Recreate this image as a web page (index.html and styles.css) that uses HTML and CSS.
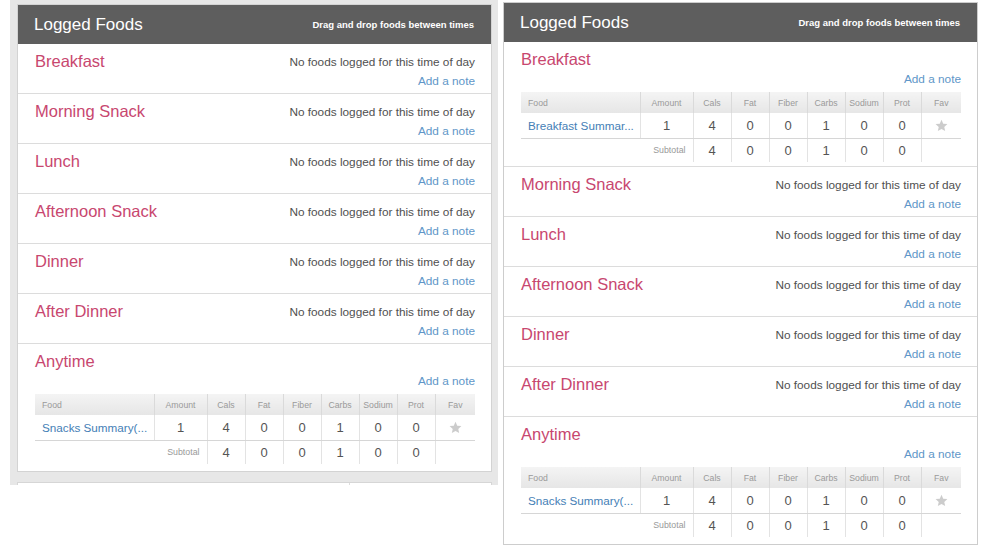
FILE: index.html
```
<!DOCTYPE html>
<html lang="en">
<head>
<meta charset="utf-8">
<title>Logged Foods</title>
<link rel="stylesheet" href="styles.css">
</head>
<body>
<div class="page">
  <div class="col-left">
    <section class="panel">
      <header class="panel-head"><h1>Logged Foods</h1><span class="hint">Drag and drop foods between times</span></header>
      <div class="meal">
        <div class="meal-top"><h2>Breakfast</h2><div class="meal-info"><p class="empty">No foods logged for this time of day</p><a class="note">Add a note</a></div></div>
      </div>
      <div class="meal">
        <div class="meal-top"><h2>Morning Snack</h2><div class="meal-info"><p class="empty">No foods logged for this time of day</p><a class="note">Add a note</a></div></div>
      </div>
      <div class="meal">
        <div class="meal-top"><h2>Lunch</h2><div class="meal-info"><p class="empty">No foods logged for this time of day</p><a class="note">Add a note</a></div></div>
      </div>
      <div class="meal">
        <div class="meal-top"><h2>Afternoon Snack</h2><div class="meal-info"><p class="empty">No foods logged for this time of day</p><a class="note">Add a note</a></div></div>
      </div>
      <div class="meal">
        <div class="meal-top"><h2>Dinner</h2><div class="meal-info"><p class="empty">No foods logged for this time of day</p><a class="note">Add a note</a></div></div>
      </div>
      <div class="meal">
        <div class="meal-top"><h2>After Dinner</h2><div class="meal-info"><p class="empty">No foods logged for this time of day</p><a class="note">Add a note</a></div></div>
      </div>
      <div class="meal meal-table meal-last">
        <div class="meal-top"><h2>Anytime</h2><div class="meal-info"><p class="empty"></p><a class="note">Add a note</a></div></div>
        <table class="foods">
          <colgroup><col class="c-food"><col class="c-amt"><col class="c-n"><col class="c-n"><col class="c-n"><col class="c-n"><col class="c-n"><col class="c-n"><col class="c-fav"></colgroup>
          <thead><tr><th>Food</th><th>Amount</th><th>Cals</th><th>Fat</th><th>Fiber</th><th>Carbs</th><th>Sodium</th><th>Prot</th><th>Fav</th></tr></thead>
          <tbody>
            <tr class="item"><td><a class="food-link">Snacks Summary(...</a></td><td>1</td><td>4</td><td>0</td><td>0</td><td>1</td><td>0</td><td>0</td><td><svg class="star" viewBox="0 0 24 24" width="13" height="13"><path d="M12 1.5l3.2 7.1 7.7.8-5.8 5.2 1.7 7.6L12 18.3l-6.8 3.9 1.7-7.6L1.1 9.4l7.7-.8z"/></svg></td></tr>
            <tr class="subtotal"><td></td><td class="sub-label">Subtotal</td><td>4</td><td>0</td><td>0</td><td>1</td><td>0</td><td>0</td><td></td></tr>
          </tbody>
        </table>
      </div>
    </section>
    <div class="panel-next"><div class="pn-a"></div><div class="pn-b"></div></div>
  </div>

  <section class="panel panel-right">
    <header class="panel-head"><h1>Logged Foods</h1><span class="hint">Drag and drop foods between times</span></header>
    <div class="meal meal-table">
      <div class="meal-top"><h2>Breakfast</h2><div class="meal-info"><p class="empty"></p><a class="note">Add a note</a></div></div>
      <table class="foods">
        <colgroup><col class="c-food"><col class="c-amt"><col class="c-n"><col class="c-n"><col class="c-n"><col class="c-n"><col class="c-n"><col class="c-n"><col class="c-fav"></colgroup>
        <thead><tr><th>Food</th><th>Amount</th><th>Cals</th><th>Fat</th><th>Fiber</th><th>Carbs</th><th>Sodium</th><th>Prot</th><th>Fav</th></tr></thead>
        <tbody>
          <tr class="item"><td><a class="food-link">Breakfast Summar...</a></td><td>1</td><td>4</td><td>0</td><td>0</td><td>1</td><td>0</td><td>0</td><td><svg class="star" viewBox="0 0 24 24" width="13" height="13"><path d="M12 1.5l3.2 7.1 7.7.8-5.8 5.2 1.7 7.6L12 18.3l-6.8 3.9 1.7-7.6L1.1 9.4l7.7-.8z"/></svg></td></tr>
          <tr class="subtotal"><td></td><td class="sub-label">Subtotal</td><td>4</td><td>0</td><td>0</td><td>1</td><td>0</td><td>0</td><td></td></tr>
        </tbody>
      </table>
    </div>
    <div class="meal">
      <div class="meal-top"><h2>Morning Snack</h2><div class="meal-info"><p class="empty">No foods logged for this time of day</p><a class="note">Add a note</a></div></div>
    </div>
    <div class="meal">
      <div class="meal-top"><h2>Lunch</h2><div class="meal-info"><p class="empty">No foods logged for this time of day</p><a class="note">Add a note</a></div></div>
    </div>
    <div class="meal">
      <div class="meal-top"><h2>Afternoon Snack</h2><div class="meal-info"><p class="empty">No foods logged for this time of day</p><a class="note">Add a note</a></div></div>
    </div>
    <div class="meal">
      <div class="meal-top"><h2>Dinner</h2><div class="meal-info"><p class="empty">No foods logged for this time of day</p><a class="note">Add a note</a></div></div>
    </div>
    <div class="meal">
      <div class="meal-top"><h2>After Dinner</h2><div class="meal-info"><p class="empty">No foods logged for this time of day</p><a class="note">Add a note</a></div></div>
    </div>
    <div class="meal meal-table meal-last">
      <div class="meal-top"><h2>Anytime</h2><div class="meal-info"><p class="empty"></p><a class="note">Add a note</a></div></div>
      <table class="foods">
        <colgroup><col class="c-food"><col class="c-amt"><col class="c-n"><col class="c-n"><col class="c-n"><col class="c-n"><col class="c-n"><col class="c-n"><col class="c-fav"></colgroup>
        <thead><tr><th>Food</th><th>Amount</th><th>Cals</th><th>Fat</th><th>Fiber</th><th>Carbs</th><th>Sodium</th><th>Prot</th><th>Fav</th></tr></thead>
        <tbody>
          <tr class="item"><td><a class="food-link">Snacks Summary(...</a></td><td>1</td><td>4</td><td>0</td><td>0</td><td>1</td><td>0</td><td>0</td><td><svg class="star" viewBox="0 0 24 24" width="13" height="13"><path d="M12 1.5l3.2 7.1 7.7.8-5.8 5.2 1.7 7.6L12 18.3l-6.8 3.9 1.7-7.6L1.1 9.4l7.7-.8z"/></svg></td></tr>
          <tr class="subtotal"><td></td><td class="sub-label">Subtotal</td><td>4</td><td>0</td><td>0</td><td>1</td><td>0</td><td>0</td><td></td></tr>
        </tbody>
      </table>
    </div>
  </section>
</div>
</body>
</html>
```
FILE: styles.css
```
* { box-sizing: border-box; margin: 0; padding: 0; }

body {
  margin: 0;
  background: #ffffff;
  font-family: "Liberation Sans", Arial, sans-serif;
  color: #4a4a4a;
}

.page {
  display: flex;
  align-items: flex-start;
  gap: 5px;
  padding-left: 10px;
}

.col-left {
  width: 488px;
  height: 485px;
  background: #e7e7e7;
  padding: 4px 6px 0 7px;
  overflow: hidden;
}

.panel {
  width: 475px;
  background: #ffffff;
  border: 1px solid #d3d3d3;
}

.panel-right {
  margin-top: 2px;
  border-color: #cdcdcd;
}

.panel-head {
  height: 39px;
  background: #5e5e5e;
  color: #ffffff;
  display: flex;
  align-items: center;
  justify-content: space-between;
  padding: 0 17px 0 16px;
}

.panel-head h1 {
  font-size: 17px;
  font-weight: normal;
  line-height: 20px;
  padding-top: 1px;
}

.hint {
  font-size: 9.5px;
  font-weight: bold;
}

.meal {
  border-bottom: 1px solid #dcdcdc;
  padding: 7px 16px 2px 17px;
}

.meal-table { padding-bottom: 4px; }
.meal-last { border-bottom: none; padding-bottom: 7px; }

.meal-top {
  display: flex;
  justify-content: space-between;
  align-items: flex-start;
}

.meal-top h2 {
  font-size: 16.5px;
  font-weight: normal;
  line-height: 21px;
  color: #c8476f;
}

.meal-info {
  margin-top: 2px;
  display: flex;
  flex-direction: column;
  align-items: flex-end;
}

.empty {
  height: 19px;
  font-size: 11.8px;
  line-height: 19px;
  color: #505050;
}

.note {
  display: block;
  font-size: 11.8px;
  line-height: 19px;
  color: #6096c8;
}

.foods {
  width: 100%;
  margin-top: 3px;
  border-collapse: collapse;
  table-layout: fixed;
}

.c-food { width: 119px; }
.c-amt { width: 53px; }
.c-n { width: 38px; }
.c-fav { width: 40px; }

.foods th {
  height: 21px;
  padding: 0;
  background: linear-gradient(#f4f4f4, #e6e6e6);
  font-size: 8.7px;
  font-weight: normal;
  color: #9a9a9a;
  text-align: center;
  border-left: 1px solid #dadada;
}

.foods th:first-child {
  text-align: left;
  padding-left: 7px;
  border-left: none;
}

.foods td {
  padding: 0;
  text-align: center;
  font-size: 13px;
  color: #555555;
  border-left: 1px solid #e3e3e3;
}

.item td {
  height: 25px;
  border-bottom: 1px solid #d6d6d6;
}

.foods .item td:first-child {
  border-left: none;
  text-align: left;
  padding-left: 7px;
  white-space: nowrap;
  overflow: hidden;
}

.food-link {
  font-size: 11.7px;
  color: #4580b6;
}

.subtotal td { height: 24px; }

.foods .subtotal td:first-child,
.foods .subtotal td.sub-label { border-left: none; }

.foods td.sub-label {
  font-size: 8.8px;
  color: #999999;
  text-align: right;
  padding-right: 7px;
}

.star {
  display: block;
  margin: 0 auto;
  fill: #cccccc;
}

.panel-next {
  margin-top: 10px;
  height: 20px;
  width: 475px;
  background: #ffffff;
  border: 1px solid #d6d6d6;
  display: flex;
}

.pn-a {
  width: 332px;
  border-right: 1px solid #dcdcdc;
}

.pn-b { flex: 1; }
```
